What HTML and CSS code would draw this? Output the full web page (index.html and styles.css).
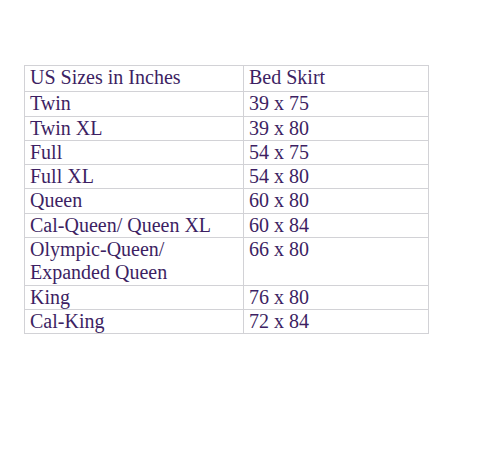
FILE: index.html
```html
<!DOCTYPE html>
<html>
<head>
<meta charset="utf-8">
<link rel="stylesheet" href="styles.css">
</head>
<body>
<table class="sizes">
  <tr class="head"><td class="c1">US Sizes in Inches</td><td class="c2">Bed Skirt</td></tr>
  <tr><td class="c1">Twin</td><td class="c2">39 x 75</td></tr>
  <tr><td class="c1">Twin XL</td><td class="c2">39 x 80</td></tr>
  <tr><td class="c1">Full</td><td class="c2">54 x 75</td></tr>
  <tr><td class="c1">Full XL</td><td class="c2">54 x 80</td></tr>
  <tr><td class="c1">Queen</td><td class="c2">60 x 80</td></tr>
  <tr><td class="c1">Cal-Queen/ Queen XL</td><td class="c2">60 x 84</td></tr>
  <tr><td class="c1">Olympic-Queen/<br>Expanded Queen</td><td class="c2">66 x 80</td></tr>
  <tr><td class="c1">King</td><td class="c2">76 x 80</td></tr>
  <tr><td class="c1">Cal-King</td><td class="c2">72 x 84</td></tr>
</table>
</body>
</html>
```
FILE: styles.css
```css
html, body {
  margin: 0;
  padding: 0;
  background: #ffffff;
}
body {
  padding: 65px 0 0 24px;
}
.sizes {
  border-collapse: collapse;
  width: 405px;
  font-family: "Liberation Serif", "Times New Roman", serif;
  font-size: 20px;
  line-height: 23.3px;
  color: #3d1f63;
}
.sizes td {
  border: 1px solid #d2d2d6;
  padding: 0 5px;
  vertical-align: top;
  white-space: nowrap;
}
.sizes .c1 {
  width: 208px;
}
.sizes .head td {
  padding-bottom: 2px;
}
```
